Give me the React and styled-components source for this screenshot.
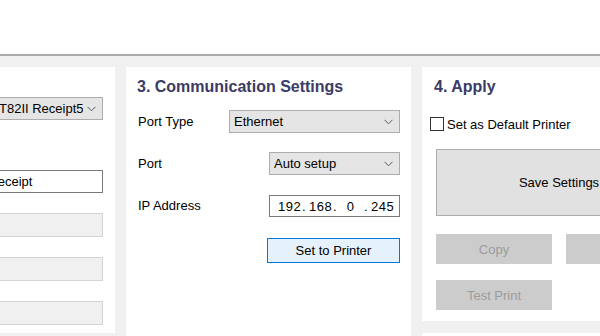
import styled, { createGlobalStyle } from "styled-components";

const GlobalStyle = createGlobalStyle`
  html, body {
    margin: 0;
    padding: 0;
  }

  body {
    width: 600px;
    height: 336px;
    overflow: hidden;
    background: #f0f0f0;
    font-family: "Liberation Sans", Arial, sans-serif;
    font-size: 13px;
    color: #000;
  }
`;

const StyledWindow = styled.div`
  display: flex;
  flex-direction: column;
  height: 336px;
`;

const StyledTopBar = styled.div`
  height: 54px;
  flex-shrink: 0;
  background: #fff;
  border-bottom: 2px solid #ababab;
`;

const StyledWorkspace = styled.div`
  flex: 1;
  display: flex;
  gap: 11px;
  padding-top: 11px;
  overflow: hidden;
`;

const StyledPanel = styled.section`
  flex-shrink: 0;
  box-sizing: border-box;
  width: ${(p) => p.$width}px;
  margin-left: ${(p) => p.$offset || 0}px;
  margin-bottom: ${(p) => p.$bottom || 0}px;
  height: ${(p) => (p.$height ? `${p.$height}px` : "auto")};
  padding: ${(p) => p.$padding};
  background: #fff;
  display: flex;
  flex-direction: column;
`;

const StyledColumn = styled.div`
  display: flex;
  flex-direction: column;
  gap: 12px;
  flex-shrink: 0;
`;

const StyledTitle = styled.h2`
  margin: 10px 0 0 ${(p) => p.$indent || 0}px;
  font-size: 16px;
  line-height: 20px;
  font-weight: bold;
  color: #3b3b66;
`;

const StyledRow = styled.div`
  display: flex;
  align-items: center;
  justify-content: space-between;
  margin-top: ${(p) => p.$top}px;
  height: ${(p) => p.$height}px;
`;

const StyledLabel = styled.span`
  line-height: 16px;
  padding-left: 1px;
`;

const StyledSelect = styled.div`
  box-sizing: border-box;
  width: ${(p) => (p.$width ? `${p.$width}px` : "100%")};
  height: ${(p) => p.$height || 23}px;
  margin-top: ${(p) => p.$top || 0}px;
  display: flex;
  align-items: center;
  gap: 4px;
  padding: 0 6px 0 4px;
  background: #e5e5e5;
  border: 1px solid #adadad;
  flex-shrink: 0;
`;

const StyledValue = styled.span`
  flex: 1;
  min-width: 0;
  overflow: hidden;
  white-space: nowrap;
`;

const StyledTextBox = styled.div`
  box-sizing: border-box;
  width: ${(p) => (p.$width ? `${p.$width}px` : "100%")};
  height: ${(p) => p.$height || 23}px;
  margin-top: ${(p) => p.$top || 0}px;
  padding: 0 4px 0 ${(p) => p.$pad || 4}px;
  display: flex;
  align-items: center;
  white-space: nowrap;
  overflow: hidden;
  background: ${(p) => (p.$disabled ? "#f0f0f0" : "#fff")};
  border: 1px solid ${(p) => (p.$disabled ? "#d4d4d4" : "#7a7a7a")};
  flex-shrink: 0;
`;

const StyledIpBox = styled.div`
  box-sizing: border-box;
  width: 131px;
  height: 22px;
  padding: 0 0 0 8px;
  display: grid;
  grid-template-columns: 21px 10px 21px 10px 21px 10px 21px;
  align-items: center;
  background: #fff;
  border: 1px solid #7a7a7a;
`;

const StyledIpPart = styled.span`
  text-align: center;
  letter-spacing: 0.5px;
`;

const StyledButton = styled.button`
  box-sizing: border-box;
  width: ${(p) => p.$width}px;
  height: ${(p) => p.$height}px;
  margin: ${(p) => p.$top || 0}px 0 0 ${(p) => p.$left || 0}px;
  padding: 0;
  font-family: inherit;
  font-size: 13px;
  color: #000;
  background: #e1e1e1;
  border: 1px solid #adadad;
  align-self: ${(p) => (p.$end ? "flex-end" : "flex-start")};

  &.primary {
    background: #e5f1fb;
    border-color: #0078d7;
  }

  &:disabled {
    background: #cccccc;
    border-color: #cccccc;
    color: #9c9c9c;
  }
`;

const StyledCheckRow = styled.label`
  display: flex;
  align-items: center;
  gap: 3px;
  margin-top: 20px;
  height: 14px;
`;

const StyledCheckBox = styled.span`
  box-sizing: border-box;
  width: 14px;
  height: 14px;
  border: 1px solid #333;
  background: #fff;
`;

const StyledButtonGrid = styled.div`
  display: grid;
  grid-template-columns: 116px 116px;
  grid-auto-rows: 30px;
  column-gap: 14px;
  row-gap: 16px;
  margin: 18px 0 0 6px;

  & > button {
    width: 100%;
    height: 100%;
    margin: 0;
  }
`;

function Chevron() {
  return (
    <svg width="9" height="6" viewBox="0 0 9 6">
      <polyline
        points="0.5,0.8 4.5,4.8 8.5,0.8"
        fill="none"
        stroke="#5a5a5a"
        strokeWidth="1"
      />
    </svg>
  );
}

function Select({ value, ...rest }) {
  return (
    <StyledSelect {...rest}>
      <StyledValue>{value}</StyledValue>
      <Chevron />
    </StyledSelect>
  );
}

function IpAddress({ parts }) {
  const cells = parts.flatMap((part, i) =>
    i === 0
      ? [<StyledIpPart key={`p${i}`}>{part}</StyledIpPart>]
      : [
          <StyledIpPart key={`d${i}`}>.</StyledIpPart>,
          <StyledIpPart key={`p${i}`}>{part}</StyledIpPart>,
        ]
  );
  return <StyledIpBox>{cells}</StyledIpBox>;
}

export default function App() {
  return (
    <>
      <GlobalStyle />
      <StyledWindow>
        <StyledTopBar />
        <StyledWorkspace>
          <StyledPanel $width={240} $offset={-125} $bottom={3} $padding="30px 12px 0 47px">
            <Select value="EPSON TM-T82II Receipt5" />
            <StyledTextBox $top={50} $pad={9}>TM-T82II Receipt</StyledTextBox>
            <StyledTextBox $top={20} $height={24} $disabled />
            <StyledTextBox $top={20} $height={24} $disabled />
            <StyledTextBox $top={20} $height={24} $disabled />
          </StyledPanel>

          <StyledPanel $width={285} $padding="0 11px 0 11px">
            <StyledTitle>3. Communication Settings</StyledTitle>
            <StyledRow $top={13} $height={23}>
              <StyledLabel>Port Type</StyledLabel>
              <Select value="Ethernet" $width={171} />
            </StyledRow>
            <StyledRow $top={19} $height={23}>
              <StyledLabel>Port</StyledLabel>
              <Select value="Auto setup" $width={131} />
            </StyledRow>
            <StyledRow $top={20} $height={22}>
              <StyledLabel>IP Address</StyledLabel>
              <IpAddress parts={["192", "168", "0", "245"]} />
            </StyledRow>
            <StyledButton className="primary" $width={133} $height={25} $top={21} $end>
              Set to Printer
            </StyledButton>
          </StyledPanel>

          <StyledColumn>
            <StyledPanel $width={274} $height={254} $padding="0 14px 0 8px">
              <StyledTitle $indent={4}>4. Apply</StyledTitle>
              <StyledCheckRow>
                <StyledCheckBox />
                Set as Default Printer
              </StyledCheckRow>
              <StyledButton $width={246} $height={67} $top={18} $left={6}>
                Save Settings
              </StyledButton>
              <StyledButtonGrid>
                <StyledButton disabled>Copy</StyledButton>
                <StyledButton disabled>Paste</StyledButton>
                <StyledButton disabled>Test Print</StyledButton>
              </StyledButtonGrid>
            </StyledPanel>
            <StyledPanel $width={274} $height={60} $padding="0" />
          </StyledColumn>
        </StyledWorkspace>
      </StyledWindow>
    </>
  );
}
